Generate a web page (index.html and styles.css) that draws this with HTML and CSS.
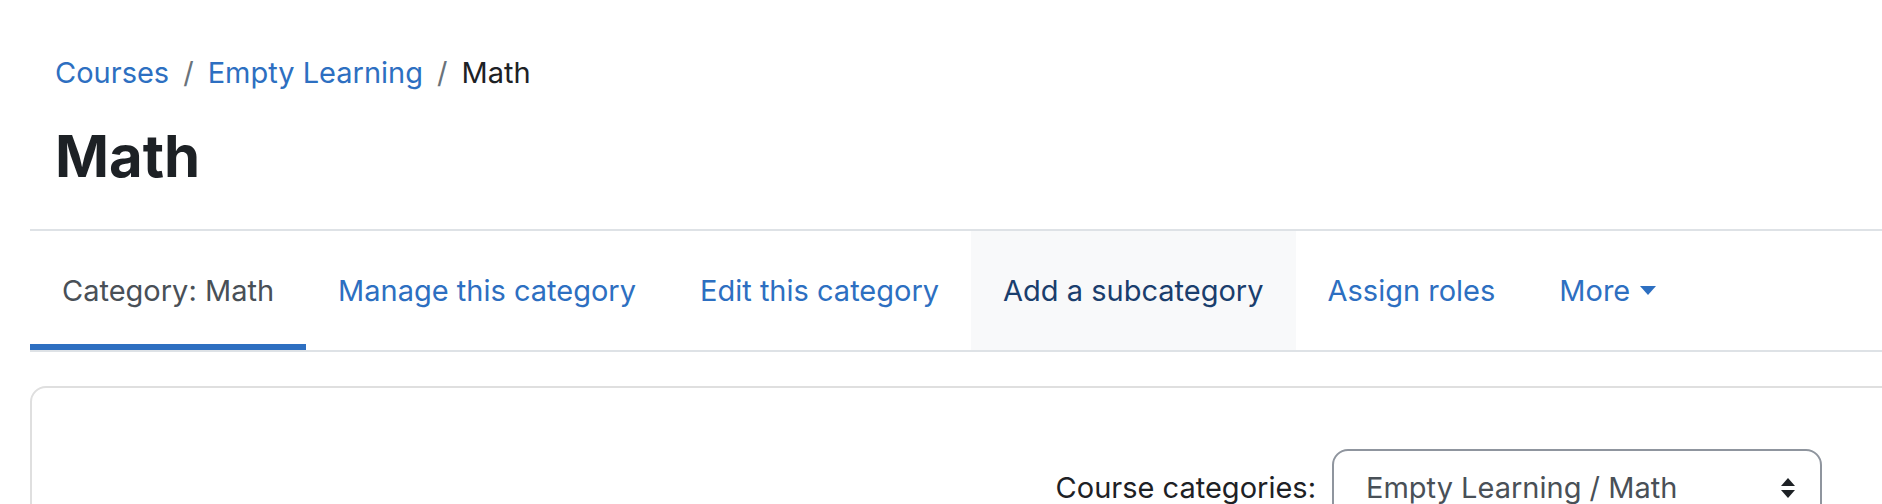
FILE: index.html
```html
<!DOCTYPE html>
<html>
<head>
<meta charset="UTF-8">
  <link rel="stylesheet" href="styles.css">
  <title>Math</title>
</head>
<body>
<div class="page">
  <div class="header">
    <ol class="crumbs">
      <li><a href="#">Courses</a></li>
      <li class="sep">/</li>
      <li><a href="#">Empty Learning</a></li>
      <li class="sep">/</li>
      <li class="here">Math</li>
    </ol>
    <h1 class="title">Math</h1>
  </div>

  <ul class="tabs">
    <li><a class="active" href="#">Category: Math</a></li>
    <li><a href="#">Manage this category</a></li>
    <li><a href="#">Edit this category</a></li>
    <li><a class="hover" href="#">Add a subcategory</a></li>
    <li><a href="#">Assign roles</a></li>
    <li><a href="#">More <span class="caret"></span></a></li>
  </ul>

  <div class="card">
    <div class="jump">
      <label class="jump-label">Course categories:</label>
      <div class="select">
        <span>Empty Learning / Math</span>
        <svg class="updown" width="16" height="20" viewBox="0 0 16 20">
          <path d="M8 0 L15 8 L1 8 Z" fill="#1d2125"/>
          <path d="M1 12 L15 12 L8 20 Z" fill="#1d2125"/>
        </svg>
      </div>
    </div>
  </div>
</div>
</body>
</html>
```

FILE: styles.css
```css
html, body
{
  margin: 0;
  padding: 0;
  overflow: hidden;
  background: #fff;
}
body
{
  font-family: Inter, "Noto Sans", "Liberation Sans", sans-serif;
  font-size: 29px;
  color: #1d2125;
}
a
{
  color: #2d6fc1;
  text-decoration: none;
}
.page
{
  padding-left: 30px;
  margin-right: -40px;
}

/* header */
.header
{
  padding: 50px 0 0 25px;
  height: 179px;
}
.crumbs
{
  list-style: none;
  margin: 0;
  padding: 0;
  display: flex;
  line-height: 45px;
}
.crumbs .sep
{
  color: #6a737b;
  padding: 0 14px;
}
.crumbs .here
{
  color: #1d2125;
}
.title
{
  margin: 26px 0 0 0;
  font-size: 58px;
  line-height: 70px;
  font-weight: 700;
}

/* secondary nav */
.tabs
{
  list-style: none;
  margin: 0;
  padding: 0;
  display: flex;
  border-top: 2px solid #dee2e6;
  border-bottom: 2px solid #dee2e6;
}
.tabs li a
{
  display: flex;
  align-items: center;
  height: 119px;
  padding: 0 32px;
  box-sizing: border-box;
}
.tabs li a.active
{
  color: #495057;
  border-bottom: 6px solid #2d6fc1;
  padding-top: 6px;
}
.tabs li a.hover
{
  background: #f8f9fa;
  color: #1a3e6d;
}
.caret
{
  display: inline-block;
  margin-left: 10px;
  width: 0;
  height: 0;
  border-left: 8px solid transparent;
  border-right: 8px solid transparent;
  border-top: 9px solid #2d6fc1;
}

/* card */
.card
{
  margin-top: 34px;
  border: 2px solid #dfdfdf;
  border-radius: 16px;
  padding: 61px 98px 40px 0;
  height: 200px;
}
.jump
{
  display: flex;
  justify-content: flex-end;
  align-items: flex-start;
  gap: 16px;
}
.jump-label
{
  line-height: 77px;
}
.select
{
  width: 490px;
  height: 77px;
  box-sizing: border-box;
  border: 2px solid #8f959e;
  border-radius: 16px;
  padding: 0 24px 0 32px;
  display: flex;
  align-items: center;
  justify-content: space-between;
  color: #495057;
}
```
